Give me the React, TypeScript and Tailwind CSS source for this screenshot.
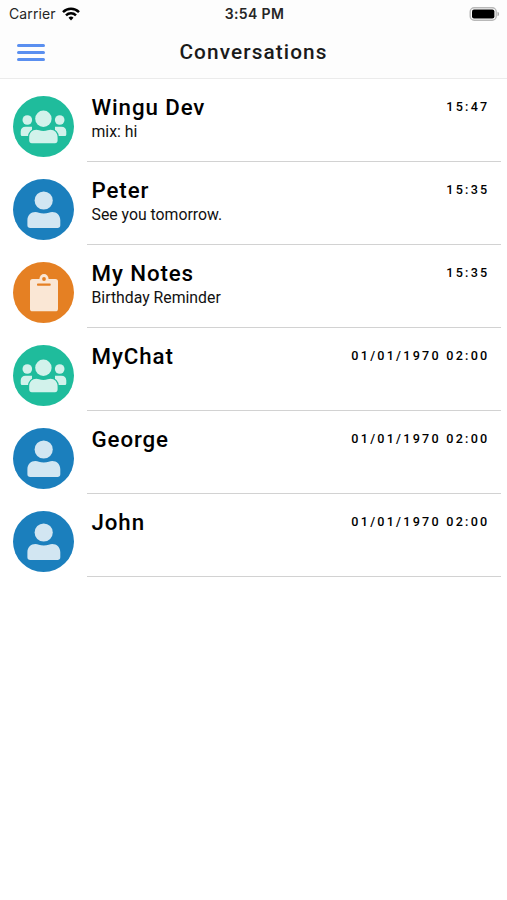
type Kind = "group" | "person" | "notes";

interface Conversation {
  name: string;
  kind: Kind;
  time: string;
  message?: string;
}

const conversations: Conversation[] = [
  { name: "Wingu Dev", kind: "group", time: "15:47", message: "mix: hi" },
  { name: "Peter", kind: "person", time: "15:35", message: "See you tomorrow." },
  { name: "My Notes", kind: "notes", time: "15:35", message: "Birthday Reminder" },
  { name: "MyChat", kind: "group", time: "01/01/1970 02:00" },
  { name: "George", kind: "person", time: "01/01/1970 02:00" },
  { name: "John", kind: "person", time: "01/01/1970 02:00" },
];

function Avatar({ kind }: { kind: Kind }) {
  return (
    <svg viewBox="0 0 61 61" className="h-[61px] w-[61px] shrink-0">
      {kind === "group" && (
        <>
          <circle cx="30.5" cy="30.5" r="30.5" fill="#1fbc9c" />
          <g fill="#d2f2eb">
            <circle cx="14.3" cy="24" r="4.8" />
            <circle cx="46.7" cy="24" r="4.8" />
            <path d="M7.7 38.2V35.5c0-3 2-4.8 4.8-4.8h6.5v9.3H9.2c-1 0-1.5-.7-1.5-1.8Z" />
            <path d="M53.3 38.2V35.5c0-3-2-4.8-4.8-4.8H42v9.3h9.8c1 0 1.5-.7 1.5-1.8Z" />
          </g>
          <path
            d="M16.2 44.6v-3.4c0-4.3 3-7.4 7.2-7.4 1.5 0 3.5 1.2 7 1.2s5.5-1.2 7-1.2c4.2 0 7.2 3.1 7.2 7.4v3.4c0 1.6-1 2.6-2.6 2.6H18.8c-1.6 0-2.6-1-2.6-2.6Z"
            fill="#d2f2eb"
            stroke="#1fbc9c"
            strokeWidth="2.6"
            paintOrder="stroke"
          />
          <circle cx="30.4" cy="22.7" r="8.2" fill="#d2f2eb" stroke="#1fbc9c" strokeWidth="2.6" paintOrder="stroke" />
        </>
      )}
      {kind === "person" && (
        <>
          <circle cx="30.5" cy="30.5" r="30.5" fill="#1b7fbd" />
          <g fill="#d2e6f2">
            <circle cx="30.7" cy="21.5" r="9.1" />
            <path d="M14.4 46.2v-4.9c0-5 3.4-8.4 8-8.4 2.3 0 4.3 1.5 8.4 1.5s6.1-1.5 8.4-1.5c4.7 0 8.1 3.4 8.1 8.4v4.9c0 1.7-1.1 2.8-2.8 2.8H17.2c-1.7 0-2.8-1.1-2.8-2.8Z" />
          </g>
        </>
      )}
      {kind === "notes" && (
        <>
          <circle cx="30.5" cy="30.5" r="30.5" fill="#e58023" />
          <rect x="17" y="17" width="28" height="32.3" rx="2.6" fill="#fae7d5" />
          <circle cx="31" cy="16.6" r="4.5" fill="#fae7d5" />
          <circle cx="31" cy="17" r="1.9" fill="#e58023" />
          <rect x="24" y="21.5" width="13.7" height="2.3" rx="0.8" fill="#e58023" />
        </>
      )}
    </svg>
  );
}

function StatusBar() {
  return (
    <div className="grid h-[27px] grid-cols-3 items-center pr-[7px] pl-[9px] font-['Inter',sans-serif] text-[#262626]">
      <div className="flex h-[26px] items-center gap-[6px]">
        <span className="text-[14px] leading-[26px] tracking-[0.1px]">Carrier</span>
        <svg viewBox="0 0 18 14" className="h-[14px] w-[18px]" fill="none" stroke="#000" strokeWidth="2.5">
          <path d="M1 5.1a11.5 11.5 0 0 1 16 0" />
          <path d="M4 8.3a7.2 7.2 0 0 1 10 0" />
          <path d="M6.5 10.8a3.6 3.6 0 0 1 5 0L9 13.5Z" fill="#000" stroke="none" />
        </svg>
      </div>
      <span className="text-center text-[14px] leading-[26px] font-semibold tracking-[0.35px]">3:54 PM</span>
      <svg viewBox="0 0 31 14" className="h-[14px] w-[31px] justify-self-end">
        <rect x="1.2" y="0.7" width="26" height="12.6" rx="4" fill="#fff" stroke="#b8b8b8" strokeWidth="1.4" />
        <rect x="3" y="2.5" width="22.4" height="9" rx="2" fill="#000" />
        <path d="M28.5 4.8a2.3 2.3 0 0 1 0 4.4Z" fill="#aaa" />
      </svg>
    </div>
  );
}

export default function App() {
  return (
    <div className="min-h-[900px] w-full bg-white font-['Roboto',sans-serif] text-black">
      <header className="h-[79px] border-b border-[#ebebeb] bg-[#fdfdfd]">
        <StatusBar />
        <div className="grid h-[51px] grid-cols-[60px_1fr_60px] items-center">
          <button aria-label="Menu" className="ml-[17px] flex w-[28px] flex-col gap-[4.7px]">
            <span className="h-[2.5px] rounded-full bg-[#5a8ff0]" />
            <span className="h-[2.5px] rounded-full bg-[#5a8ff0]" />
            <span className="h-[2.5px] rounded-full bg-[#5a8ff0]" />
          </button>
          <h1 className="text-center text-[20.8px] leading-[51px] font-medium tracking-[1.1px] text-[#1a1a1a]">
            Conversations
          </h1>
        </div>
      </header>
      <main>
        {conversations.map((c) => (
          <div key={c.name} className="flex h-[83px] pl-[13px]">
            <div className="pt-[17px]">
              <Avatar kind={c.kind} />
            </div>
            <div className="mr-[6px] ml-[13px] flex-1 border-b border-[#d2d2d2] pt-[15px] pl-[4.5px]">
              <div className="flex items-center justify-between pr-[11.5px]">
                <h2 className="text-[22.3px] leading-[26px] font-medium tracking-[0.9px]">{c.name}</h2>
                <time className="text-[12.6px] leading-[26px] font-medium tracking-[2.25px]">{c.time}</time>
              </div>
              <p className="text-[15.8px] leading-[24px] text-[#111]">{c.message}</p>
            </div>
          </div>
        ))}
      </main>
    </div>
  );
}
